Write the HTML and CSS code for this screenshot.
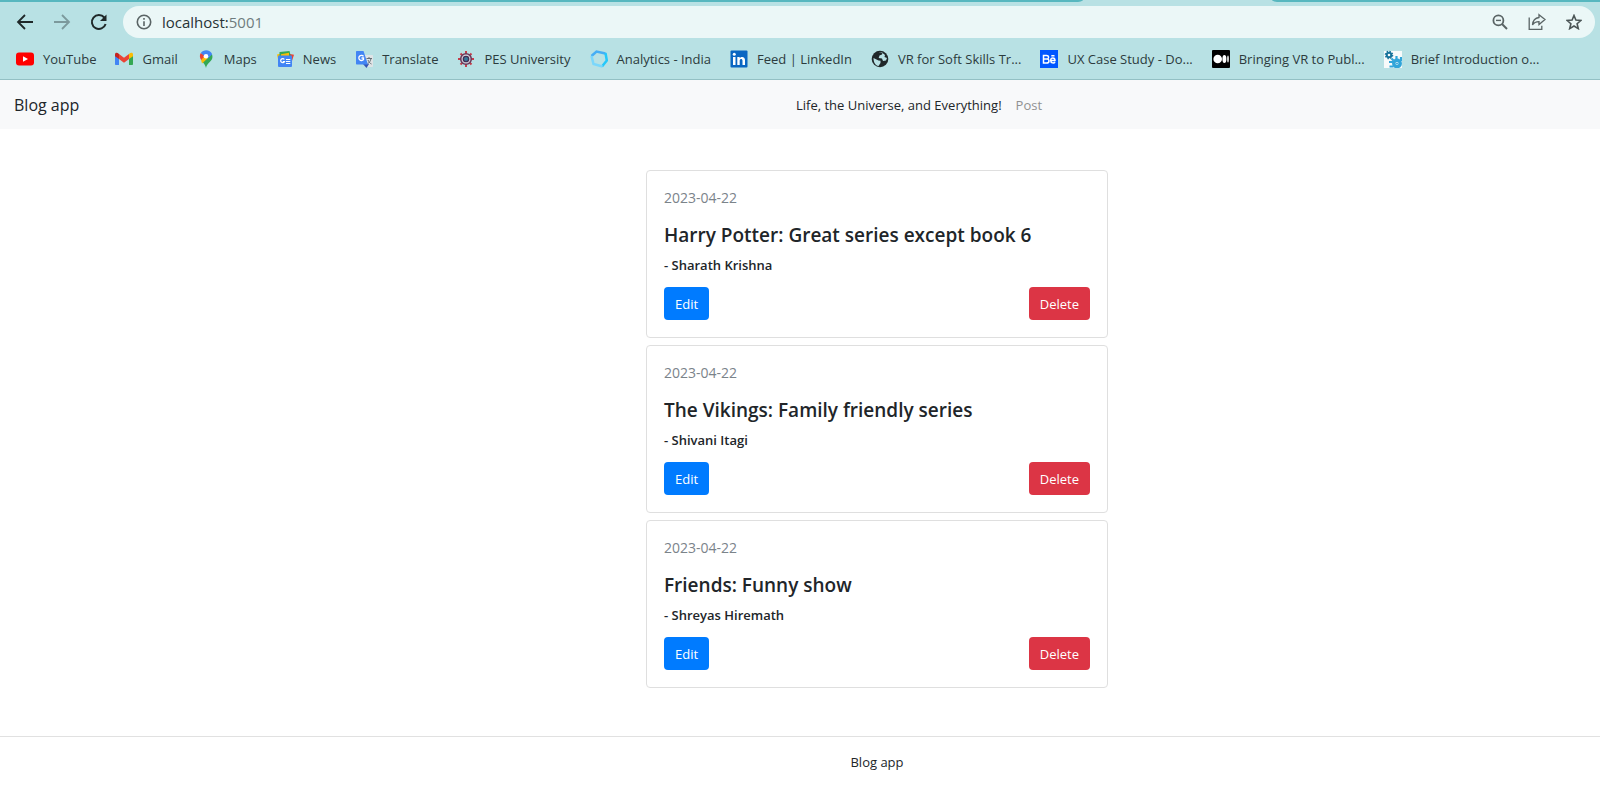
FILE: index.html
```html
<!DOCTYPE html>
<html lang="en">
<head>
<meta charset="utf-8">
<meta name="viewport" content="width=device-width, initial-scale=1">
<title>Blog app</title>
<link rel="stylesheet" href="styles.css">
</head>
<body>
<header class="browser">
  <div class="tabstrip"><span class="tab-rest tab-rest-left"></span><span class="tab-active"></span><span class="tab-rest tab-rest-right"></span></div>
  <div class="toolbar">
    <div class="nav-buttons">
      <button class="tool" type="button" aria-label="Back"><svg viewBox="0 0 18 18" fill="none" stroke="#1f2829" stroke-width="1.800"><path d="M17 9H2M9 2 2 9l7 7"/></svg></button>
      <button class="tool" type="button" aria-label="Forward"><svg viewBox="0 0 18 18" fill="none" stroke="#7c999c" stroke-width="1.800"><path d="M1 9h15M9 2l7 7-7 7"/></svg></button>
      <button class="tool" type="button" aria-label="Reload"><svg viewBox="0 0 18 18" fill="none"><path d="M14.300 4.500A7 7 0 1 0 15.600 11" stroke="#1f2829" stroke-width="2"/><path d="M16.500 1.500v6.500H10z" fill="#1f2829"/></svg></button>
    </div>
    <form class="address">
      <button class="tool-small" type="button" aria-label="Site information"><svg viewBox="0 0 16 16" fill="none" stroke="#5a6465" stroke-width="1.6"><circle cx="8" cy="8" r="6.7"/><path d="M8 7.2V12M8 4v1.8"/></svg></button>
      <span class="url">localhost:<span class="port">5001</span></span>
      <button class="tool-small" type="button" aria-label="Zoom"><svg viewBox="0 0 16 16" fill="none" stroke="#5a6465"><circle cx="6.4" cy="6.4" r="5" stroke-width="1.8"/><path d="m10 10 5 5" stroke-width="2"/><path d="M4 6.4h5" stroke-width="1.4"/></svg></button>
      <button class="tool-small share" type="button" aria-label="Share"><svg viewBox="0 0 18 18" fill="none" stroke="#5a6465" stroke-width="1.3"><path d="M1.200 4.500V16.300h12.600v-3.500"/><path d="M11 1.700 17 6.500l-6 5V8.700c-3 0-5 .8-6.500 3.300.3-4 2.500-7 6.500-7.500z"/></svg></button>
      <button class="tool-small" type="button" aria-label="Bookmark this page"><svg viewBox="0 0 16 16" fill="none" stroke="#4b5556" stroke-width="1.6"><path d="m8 1.500 1.900 4.600 5 .4-3.800 3.200 1.200 4.900L8 12l-4.300 2.600 1.200-4.900L1.100 6.500l5-.4z"/></svg></button>
    </form>
  </div>
  <nav class="bookmarks" aria-label="Bookmarks">
    <a class="bookmark" href="#"><svg viewBox="0 0 18 18"><rect y="2.500" width="18" height="13" rx="3" fill="#f00"/><path d="m7 6.300 5 2.700-5 2.700z" fill="#fff"/></svg><span>YouTube</span></a>
    <a class="bookmark" href="#"><svg viewBox="0 0 18 18"><path d="M0 5v9c0 .6.4 1 1 1h3V7z" fill="#4285f4"/><path d="M18 5v9c0 .6-.4 1-1 1h-3V7z" fill="#34a853"/><path d="M4 4 9 7.800 14 4v5l-5 3.700L4 9z" fill="#ea4335"/><path d="M0 4.500C0 2.300 2.300 2.200 4 4v5L0 6.200z" fill="#c5221f"/><path d="M18 4.500c0-2.200-2.300-2.300-4-.5v5l4-2.800z" fill="#fbbc04"/></svg><span>Gmail</span></a>
    <a class="bookmark" href="#"><svg viewBox="0 0 18 18"><path d="M9 18c-.6-3.200-2.300-4.600-4-7L12 3l3 1.500c.5 1 .6 2.800.2 4C14 12 10 13 9 18z" fill="#34a853"/><path d="M4 9.500 8 5l3 3-6 5.500z" fill="#fbbc04"/><path d="M3.800 3 8 5.500 4.200 10C2.600 7.700 2.400 5 3.800 3z" fill="#ea4335"/><path d="M3.800 3c2.700-3.700 9.300-3.700 11.400 1.300L11 8.500 7 5.700z" fill="#4285f4"/><circle cx="9" cy="6.300" r="2.300" fill="#fff"/></svg><span>Maps</span></a>
    <a class="bookmark" href="#"><svg viewBox="0 0 18 18"><path d="m1 4.500 3-.7V9H2z" fill="#fbbc04"/><path d="m14 4 4 .8L16 11h-2z" fill="#ea4335"/><path d="m3.500 2 10-1 1.500 6H3.500z" fill="#34a853"/><path d="m5 4.300 8-1.500V7H5z" fill="#fbbc04"/><rect x="2" y="5.500" width="14" height="11.500" rx="1" fill="#4285f4"/><path d="M8.300 9.500A2 2 0 1 0 8.500 11.500H6.800M10 9.500h4.300M10 11.500h4.300M10 13.500h4.300" fill="none" stroke="#fff" stroke-width="1.200"/></svg><span>News</span></a>
    <a class="bookmark" href="#"><svg viewBox="0 0 18 18"><path d="M8 5h9c.6 0 1 .4 1 1v10c0 .6-.4 1-1 1h-5z" fill="#dfe4e6"/><path d="m8 14 6 0-2.500 4z" fill="#3454b4"/><path d="M2 1h6.500L13 14.500H2c-.6 0-1-.4-1-1V2c0-.6.4-1 1-1z" fill="#4285f4"/><path d="M8.500 6.300A2.600 2.600 0 1 0 8.500 9.500V8H6.500" fill="none" stroke="#fff" stroke-width="1.300"/><path d="M11.500 8.500H17M14 7v1.500M16 8.500c-.5 2.500-1.500 4-3.500 5.500M13 10c.7 2 2 3.300 3.500 4" fill="none" stroke="#666e75"/></svg><span>Translate</span></a>
    <a class="bookmark" href="#"><svg viewBox="0 0 18 18" fill="none"><path d="M9 1v3M9 14v3M1 9h3M14 9h3M3.500 3.500l2 2M14.500 3.500l-2 2M3.500 14.500l2-2M14.500 14.500l-2-2" stroke="#c43d4b" stroke-width="2"/><circle cx="9" cy="9" r="5.300" fill="#d8d6df" stroke="#6a3a5c" stroke-width="1.600"/><circle cx="9" cy="9" r="2.700" fill="#36789a" stroke="#412f56" stroke-width="1.300"/></svg><span>PES University</span></a>
    <a class="bookmark" href="#"><svg viewBox="0 0 18 18" fill="none" stroke-width="2.500"><path d="m1.500 6 5-4.500 9 2" stroke="#45aef5"/><path d="m15.500 3 1.300 7.500-4.800 6" stroke="#25c8fa"/><path d="m12.500 16.500-9-2.500-2-8" stroke="#7bd7fb"/></svg><span>Analytics - India</span></a>
    <a class="bookmark" href="#"><svg viewBox="0 0 18 18"><rect x=".5" y=".5" width="17" height="17" rx="1" fill="#0a66c2"/><path d="M3 7h2.500v8H3zM7.300 7h2.400v1.200C11 6.200 15 6.300 15 10v5h-2.500v-4.300c0-2.500-2.800-2.300-2.800 0V15H7.300z" fill="#fff"/><circle cx="4.250" cy="4.300" r="1.500" fill="#fff"/></svg><span>Feed | LinkedIn</span></a>
    <a class="bookmark" href="#"><svg viewBox="0 0 18 18"><circle cx="9" cy="9" r="8.300" fill="#202729"/><path d="m2.500 8 5 2.500 2 .2v2.300l-2 3c-3-.5-5-3.500-5-8zM8.500 2.500h3l-.5 2-2.500 1-.8 2.500 3.300.5 1 2.500 3-.5 1-2.500-2.500-1 .5-2c-2-2-4-2.500-5.500-2z" fill="#b9e1e4"/></svg><span>VR for Soft Skills Tr...</span></a>
    <a class="bookmark" href="#"><svg viewBox="0 0 18 18"><path fill="#0057ff" d="M0 0h18v18H0z"/><path d="M3.500 5.500h3c2.700 0 2.700 3.300.6 3.500 2.600.2 2.600 4-.6 4h-3zM3.500 9H7M15 12c-1 1.500-4.300 1.300-4.300-1.500 0-3.500 4.300-3.300 4.300 0h-4M11.300 5.700h3.200" fill="none" stroke="#fff" stroke-width="1.500"/></svg><span>UX Case Study - Do...</span></a>
    <a class="bookmark" href="#"><svg viewBox="0 0 18 18"><rect width="18" height="18" rx="1" fill="#000"/><circle cx="5.700" cy="9" r="4.300" fill="#fff"/><ellipse cx="12.400" cy="9" rx="2" ry="4" fill="#fff"/><ellipse cx="16" cy="9" rx=".8" ry="3.600" fill="#fff"/></svg><span>Bringing VR to Publ...</span></a>
    <a class="bookmark" href="#"><svg viewBox="0 0 18 18" fill="none"><path fill="#f7fafa" d="M0 1h18v17H0z"/><circle cx="5" cy="5" r="2.300" stroke="#16729a" stroke-width="2"/><circle cx="5" cy="5" r="3.700" stroke="#16729a" stroke-width="1.200" stroke-dasharray="1.500 1.400"/><circle cx="13" cy="13.500" r="3.200" stroke="#31a5d9" stroke-width="3.500"/><circle cx="13" cy="13.500" r="1" fill="#31a5d9"/><path d="M5 12h4M7.500 8.500l2 2M12.500 6v4M17 7v4M5.500 16.500h4" stroke="#31a5d9" stroke-width="2.200"/></svg><span>Brief Introduction o...</span></a>
  </nav>
</header>
<header class="site-nav">
  <a class="brand" href="#">Blog app</a>
  <nav class="links"><a class="link active" href="#">Life, the Universe, and Everything!</a><a class="link" href="#">Post</a></nav>
</header>
<main class="posts">
  <article class="card">
    <time class="date" datetime="2023-04-22">2023-04-22</time>
    <h2 class="title">Harry Potter: Great series except book 6</h2>
    <p class="author">- Sharath Krishna</p>
    <div class="actions"><button class="btn btn-edit" type="button">Edit</button><button class="btn btn-delete" type="button">Delete</button></div>
  </article>
  <article class="card">
    <time class="date" datetime="2023-04-22">2023-04-22</time>
    <h2 class="title">The Vikings: Family friendly series</h2>
    <p class="author">- Shivani Itagi</p>
    <div class="actions"><button class="btn btn-edit" type="button">Edit</button><button class="btn btn-delete" type="button">Delete</button></div>
  </article>
  <article class="card">
    <time class="date" datetime="2023-04-22">2023-04-22</time>
    <h2 class="title">Friends: Funny show</h2>
    <p class="author">- Shreyas Hiremath</p>
    <div class="actions"><button class="btn btn-edit" type="button">Edit</button><button class="btn btn-delete" type="button">Delete</button></div>
  </article>
</main>
<footer class="footer">Blog app</footer>
</body>
</html>
```
FILE: styles.css
```css
* { box-sizing: border-box; }
body { margin: 0; background: #fff; color: #212529; font: 13px/22px "Open Sans", "Noto Sans", sans-serif; }
a { color: inherit; text-decoration: none; }
button { font: inherit; border: 0; padding: 0; background: none; color: inherit; }
svg { display: block; flex: none; }

.browser { background: #b8e1e4; border-bottom: 1px solid #93c0c4; }
.tabstrip { display: flex; height: 2px; }
.tab-rest { flex: 1083; background: #57b7bf; }
.tab-active { flex: 189; }
.tab-rest-left { border-bottom-right-radius: 8px 2px; }
.tab-rest-right { flex: 328; border-bottom-left-radius: 8px 2px; }
.toolbar { display: flex; align-items: center; padding: 4px 5px 0 16px; }
.nav-buttons { display: flex; gap: 19px; width: 107px; }
.tool svg { width: 18px; height: 18px; }
.address { flex: 1; display: flex; align-items: center; height: 32px; padding: 0 13px; border-radius: 16px; background: #ebf7f7; }
.tool-small svg { width: 16px; height: 16px; }
.tool-small.share { margin: 0 20px; }
.tool-small.share svg { width: 18px; height: 18px; }
.url { flex: 1; padding-left: 10px; font-size: 15px; color: #273335; }
.port { color: #6f7c7e; }
.bookmarks { display: flex; gap: 19px; height: 41px; padding: 0 16px; align-items: center; white-space: nowrap; overflow: hidden; color: #2c3b3d; }
.bookmark { display: flex; align-items: center; gap: 9px; }
.bookmark svg { width: 18px; height: 18px; }

.site-nav { display: flex; align-items: center; height: 49px; padding: 0 14px; background: #f8f9fa; }
.brand { width: calc(50% - 4px); font-size: 16px; }
.links { display: flex; gap: 14px; }
.link { color: #909192; }
.link.active { color: #212529; }

.posts { display: flex; flex-direction: column; align-items: center; gap: 7px; padding: 41px 0 48px 154px; }
.card { width: 100%; max-width: 462px; padding: 16px 17px 17px; border: 1px solid #dfdfdf; border-radius: 4px; }
.date { display: block; font-size: 14px; color: #7b838a; }
.title { margin: 13px 0 8px; font-size: 19px; line-height: 26px; font-weight: 600; }
.author { margin: 0 0 13px; line-height: 18px; font-weight: 600; }
.actions { display: flex; justify-content: space-between; }
.btn { height: 33px; padding: 0 11px; border-radius: 4px; color: #fff; }
.btn-edit { background: #007bff; }
.btn-delete { background: #dc3545; }
.footer { padding: 14px 0 26px 154px; border-top: 1px solid #e1e1e1; text-align: center; }
```
